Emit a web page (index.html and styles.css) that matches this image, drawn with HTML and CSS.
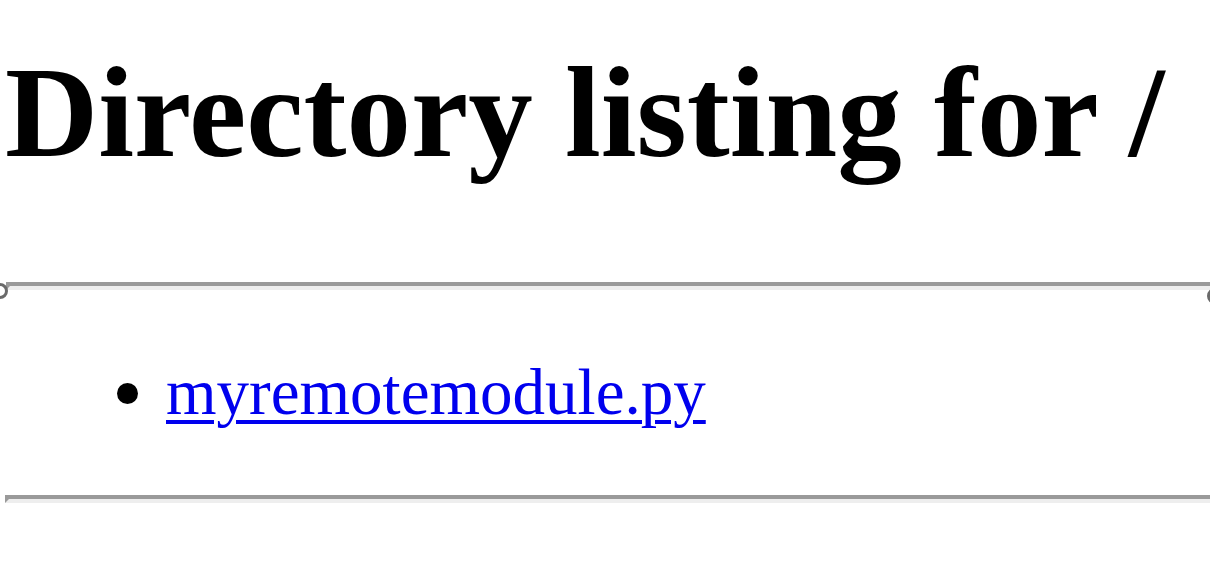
FILE: index.html
```html
<!DOCTYPE html>
<html>
<head>
<meta charset="utf-8">
<title>Directory listing for /</title>
<link rel="stylesheet" href="styles.css">
</head>
<body>
<h1 class="title">Directory listing for /</h1>
<hr class="rule rule-top">
<ul class="listing">
<li class="entry"><a class="entry-link" href="myremotemodule.py">myremotemodule.py</a></li>
</ul>
<hr class="rule">
</body>
</html>
```
FILE: styles.css
```css
html {
  overflow: hidden;
  background: #ffffff;
}

body {
  margin: 0;
  font-family: "Liberation Serif", "Times New Roman", serif;
  color: #000000;
}

.title {
  margin: 42px 0 98px 5px;
  font-size: 129px;
  font-weight: bold;
  line-height: 142px;
}

.rule {
  position: relative;
  height: 0;
  margin: 0 -60px 0 5px;
  border-style: solid;
  border-width: 4px;
  border-top-color: #9a9a9a;
  border-left-color: #9a9a9a;
  border-bottom-color: #eeeeee;
  border-right-color: #eeeeee;
}

.rule-top {
  margin-left: 6px;
  overflow: visible;
}

.rule-top::before {
  content: "";
  position: absolute;
  left: -18px;
  top: -3px;
  width: 10px;
  height: 10px;
  border: 3px solid #6a6a6a;
  border-radius: 50%;
}

.rule-top::after {
  content: "";
  position: absolute;
  left: 1197px;
  top: 2px;
  width: 10px;
  height: 10px;
  border: 3px solid #6a6a6a;
  border-radius: 50%;
}

.listing {
  margin: 63px 0 66px 6px;
  padding-left: 160px;
  font-size: 65px;
  line-height: 74px;
}

.entry::marker {
  font-size: 72px;
}

.entry-link {
  color: #0000ee;
  text-decoration: underline;
  text-decoration-thickness: 4px;
  text-underline-offset: 6px;
}
```
